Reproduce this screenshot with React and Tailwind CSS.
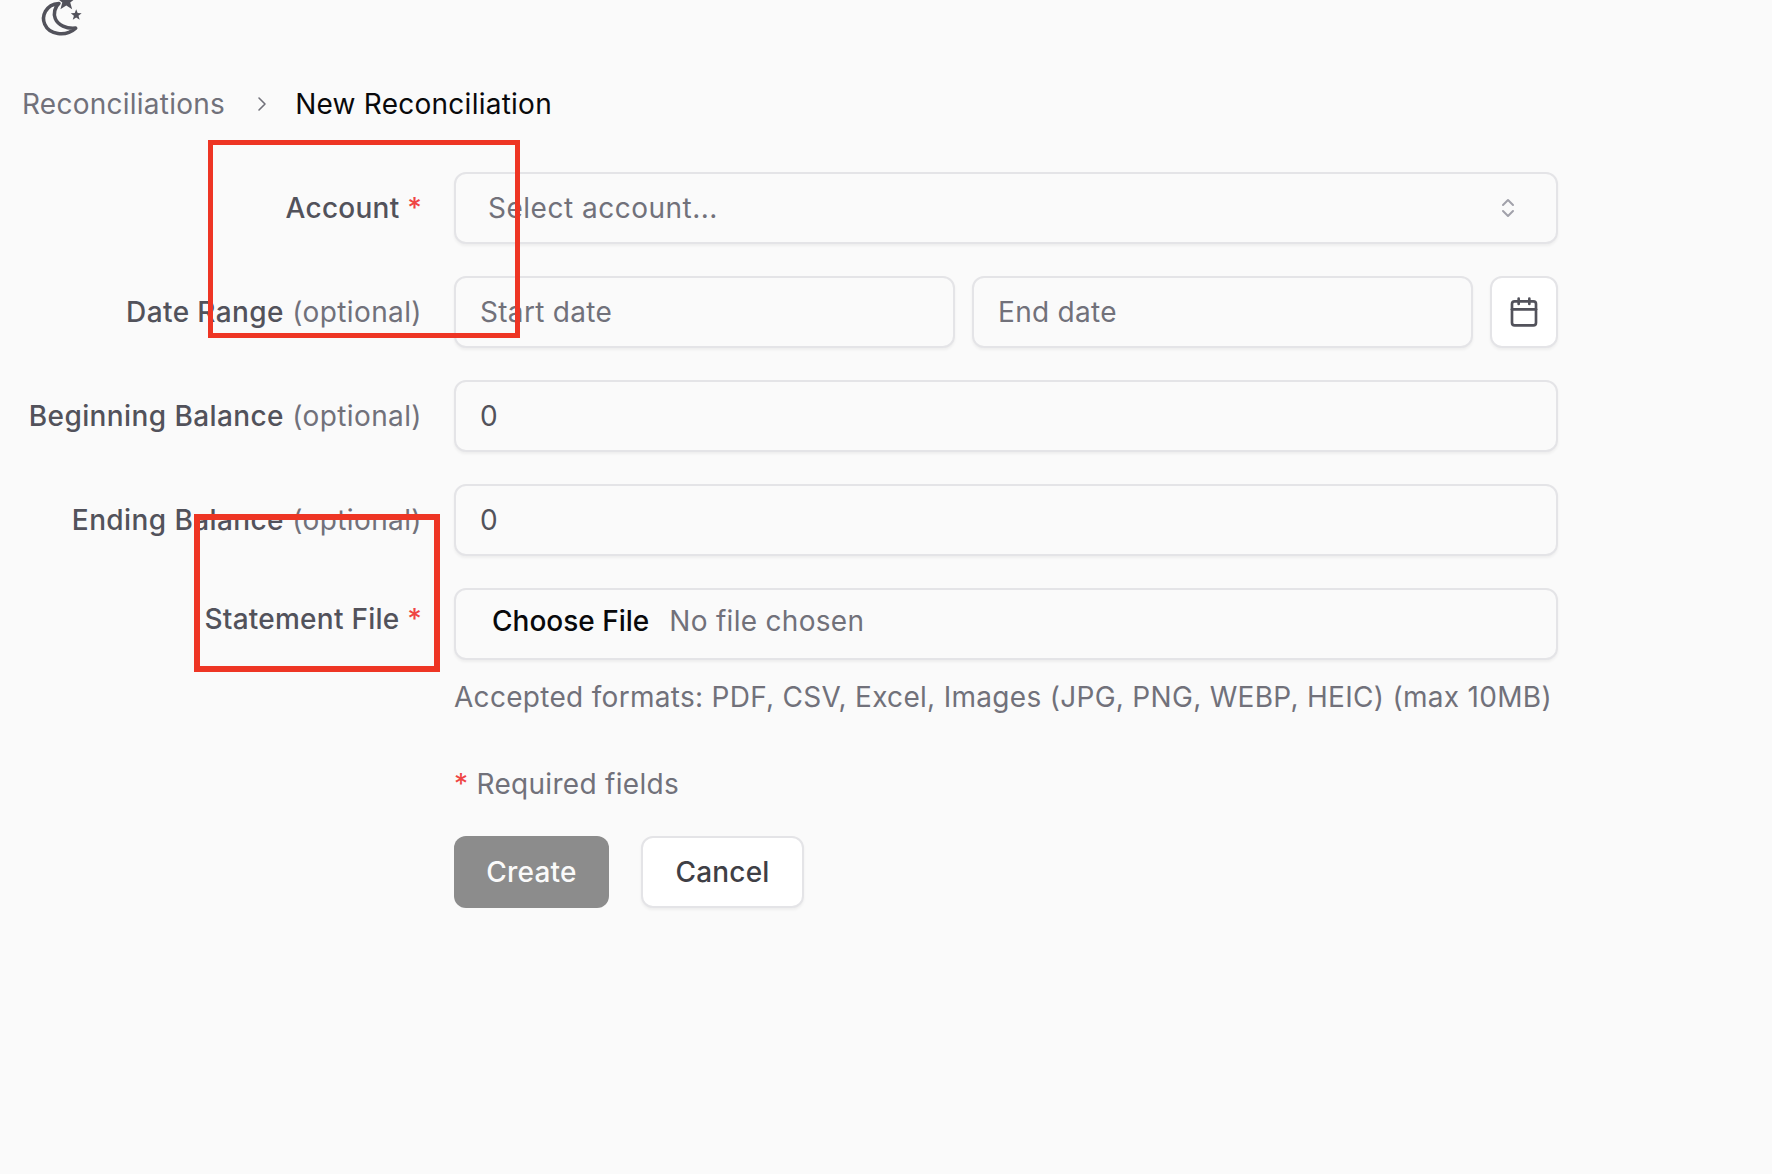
import { ChevronRight, ChevronsUpDown, Calendar } from "lucide-react";

const inputClass =
  "h-[72px] w-full rounded-xl border-2 border-[#e4e4e7] bg-[#fafafa] px-[24px] text-[28px] tracking-[0.3px] text-[#52525b] placeholder:text-[#71717a] shadow-[0_2px_3px_rgba(0,0,0,0.05)] outline-none";

function Label({ name, optional, required, className }) {
  return (
    <label className={`flex h-[72px] w-[399px] shrink-0 items-center justify-end text-right text-[28px] font-medium text-[#52525b] ${optional ? "tracking-[0.4px]" : "tracking-[0.25px]"} ${className || ""}`}>
      <span className="whitespace-nowrap">
        {name}
        {optional && <span className="font-normal text-[#71717a]"> (optional)</span>}
        {required && <span className="text-[#ef4444]"> *</span>}
      </span>
    </label>
  );
}

function MoonIcon() {
  return (
    <svg width="46" height="47" viewBox="0 0 44 44" fill="none" className="-mt-[9px] ml-[37px] block">
      <path
        d="M21 11.5C8 12.5 4 24 7.5 31.5C11.5 41 27 44 37 35C28 36 20 32 17.5 26C15.5 21 17 15 21 11.5Z"
        stroke="#52525b"
        strokeWidth="3.4"
        strokeLinejoin="round"
      />
      <path d="M28 0L30.3 6.2L37 6.5L31.8 10.5L33.6 17L28 13.3L22.4 17L24.2 10.5L19 6.5L25.7 6.2Z" fill="#52525b" />
      <path d="M37.5 17L38.9 20.6L42.7 20.8L39.7 23.2L40.8 27L37.5 24.8L34.2 27L35.3 23.2L32.3 20.8L36.1 20.6Z" fill="#52525b" />
    </svg>
  );
}

export default function App() {
  return (
    <div className="relative h-[1174px] w-full overflow-hidden bg-[#fafafa] font-['Inter',sans-serif]">
      <MoonIcon />

      <nav className="mt-[46px] flex items-center pl-[22px] text-[28px] leading-[40px] tracking-[0.25px]">
        <span className="text-[#71717a]">Reconciliations</span>
        <ChevronRight className="ml-[25px] mr-[21px] h-[24px] w-[24px] text-[#71717a]" strokeWidth={1.6} />
        <span className="text-[#09090b]">New Reconciliation</span>
      </nav>

      <form className="mt-[48px] flex w-[1558px] flex-col gap-[32px] pl-[23px]">
        <div className="flex gap-[32px]">
          <Label name="Account" required />
          <button type="button" className="flex h-[72px] flex-1 items-center justify-between rounded-xl border-2 border-[#e4e4e7] bg-[#fafafa] pl-[32px] pr-[36px] text-[28px] tracking-[0.5px] text-[#71717a] shadow-[0_2px_3px_rgba(0,0,0,0.05)]">
            <span>Select account...</span>
            <ChevronsUpDown className="h-[24px] w-[24px] text-[#a1a1aa]" />
          </button>
        </div>

        <div className="flex gap-[32px]">
          <Label name="Date Range" optional />
          <div className="flex flex-1 gap-[17px]">
            <input className={`${inputClass} flex-1`} placeholder="Start date" />
            <input className={`${inputClass} flex-1`} placeholder="End date" />
            <button type="button" className="flex h-[72px] w-[68px] shrink-0 items-center justify-center rounded-xl border-2 border-[#e4e4e7] bg-white shadow-[0_2px_3px_rgba(0,0,0,0.05)]">
              <Calendar className="h-[32px] w-[32px] text-[#52525b]" strokeWidth={2} />
            </button>
          </div>
        </div>

        <div className="flex gap-[32px]">
          <Label name="Beginning Balance" optional />
          <div className="flex-1">
            <input className={inputClass} defaultValue="0" />
          </div>
        </div>

        <div className="flex gap-[32px]">
          <Label name="Ending Balance" optional />
          <div className="flex-1">
            <input className={inputClass} defaultValue="0" />
          </div>
        </div>

        <div className="flex gap-[32px]">
          <Label name="Statement File" required className="-translate-y-[5px]" />
          <div className="flex-1">
            <div className="flex h-[72px] items-center rounded-xl border-2 border-[#e4e4e7] bg-[#fafafa] pb-[7px] pl-[36px] text-[28px] text-[#71717a] shadow-[0_2px_3px_rgba(0,0,0,0.05)]">
              <span className="mr-[20px] font-medium text-[#09090b]">Choose File</span>
              <span className="tracking-[0.3px]">No file chosen</span>
            </div>
            <p className="mt-[18px] whitespace-nowrap text-[28px] leading-[38px] tracking-[0.3px] text-[#71717a]">
              Accepted formats: PDF, CSV, Excel, Images (JPG, PNG, WEBP, HEIC) (max 10MB)
            </p>
            <p className="mt-[49px] text-[28px] leading-[38px] tracking-[0.3px] text-[#71717a]">
              <span className="text-[#ef4444]">*</span> Required fields
            </p>
            <div className="mt-[33px] flex gap-[32px]">
              <button type="button" className="h-[72px] w-[155px] rounded-xl bg-[#8c8c8c] text-[28px] font-medium tracking-[0.2px] text-[#fafafa]">
                Create
              </button>
              <button type="button" className="h-[72px] w-[163px] rounded-xl border-2 border-[#e4e4e7] bg-white text-[28px] font-medium tracking-[0.2px] text-[#3f3f46] shadow-[0_2px_3px_rgba(0,0,0,0.05)]">
                Cancel
              </button>
            </div>
          </div>
        </div>
      </form>

      {/* red annotation boxes drawn over the form */}
      <div className="absolute left-[208px] top-[140px] h-[198px] w-[312px] border-[5px] border-[#ee3524]" />
      <div className="absolute left-[194px] top-[514px] h-[158px] w-[246px] border-[6px] border-[#ee3524]" />
    </div>
  );
}
